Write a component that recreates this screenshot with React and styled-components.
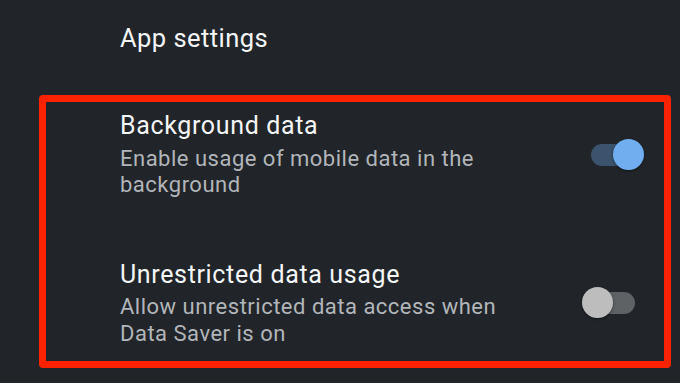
import React, { useState } from 'react';
import styled, { createGlobalStyle } from 'styled-components';

const GlobalStyle = createGlobalStyle`
    html, body {
        margin: 0;
        padding: 0;
        background: #212529;
    }
    body {
        font-family: Roboto, 'Noto Sans', 'Liberation Sans', sans-serif;
        -webkit-font-smoothing: antialiased;
    }
`;

const Page = styled.div`
    width: 680px;
    height: 383px;
    overflow: hidden;
    background: #212529;
    box-sizing: border-box;
    padding-top: 18px;
`;

const SectionTitle = styled.div`
    padding-left: 120px;
    font-size: 25.5px;
    line-height: 40px;
    color: #f4f5f6;
    letter-spacing: 0.45px;
`;

const Highlight = styled.div`
    margin: 37px 0 0 39px;
    width: 632px;
    box-sizing: border-box;
    border: 7px solid #ff2200;
    border-radius: 4px;
    padding: 9px 20px 14px 74px;
    display: flex;
    flex-direction: column;
    gap: 61px;
`;

const Row = styled.div`
    display: flex;
    align-items: center;
    justify-content: space-between;
`;

const Texts = styled.div`
    width: 405px;
`;

const Title = styled.div`
    font-size: 25px;
    line-height: 30px;
    color: #f4f5f6;
    letter-spacing: 0.65px;
`;

const Summary = styled.div`
    margin-top: 4.5px;
    font-size: 22px;
    line-height: 26.5px;
    color: #b2b5b9;
    letter-spacing: 0.5px;
`;

const SwitchBox = styled.button`
    position: relative;
    width: 62px;
    height: 32px;
    padding: 0;
    border: 0;
    background: transparent;
    cursor: pointer;
    flex-shrink: 0;
`;

const Track = styled.span`
    position: absolute;
    left: 9px;
    right: 9px;
    top: 5px;
    height: 22px;
    border-radius: 11px;
    background: ${(p) => (p.on ? '#3c536d' : '#5e6265')};
`;

const Thumb = styled.span`
    position: absolute;
    top: 0;
    left: ${(p) => (p.on ? '31px' : '0')};
    width: 31px;
    height: 31px;
    border-radius: 50%;
    background: ${(p) => (p.on ? '#70aef0' : '#bdbdbd')};
    box-shadow: 0 1px 3px rgba(0, 0, 0, 0.45);
`;

const Toggle = ({ on, onClick }) => (
    <SwitchBox onClick={onClick} aria-pressed={on}>
        <Track on={on} />
        <Thumb on={on} />
    </SwitchBox>
);

const SettingRow = ({ item, onToggle }) => (
    <Row>
        <Texts>
            <Title>{item.title}</Title>
            <Summary>{item.summary}</Summary>
        </Texts>
        <Toggle on={item.on} onClick={() => onToggle(item.id)} />
    </Row>
);

export default function App() {
    const [items, setItems] = useState([
        {
            id: 'bg',
            title: 'Background data',
            summary: 'Enable usage of mobile data in the background',
            on: true,
        },
        {
            id: 'unrestricted',
            title: 'Unrestricted data usage',
            summary: 'Allow unrestricted data access when Data Saver is on',
            on: false,
        },
    ]);

    const handleToggle = (id) => {
        setItems((prev) => prev.map((it) => (it.id === id ? { ...it, on: !it.on } : it)));
    };

    return (
        <Page>
            <GlobalStyle />
            <SectionTitle>App settings</SectionTitle>
            <Highlight>
                {items.map((item) => (
                    <SettingRow key={item.id} item={item} onToggle={handleToggle} />
                ))}
            </Highlight>
        </Page>
    );
}
